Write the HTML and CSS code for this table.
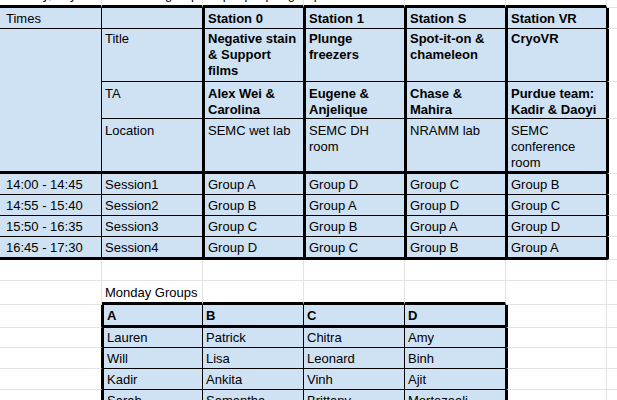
FILE: index.html
```html
<!DOCTYPE html>
<html lang="en">
<head>
<meta charset="utf-8">
<title>Schedule</title>
<link rel="stylesheet" href="styles.css">
</head>
<body>
<div class="sheet">
  <!-- R0 (clipped row above) -->
  <div class="c r0 g-r k-B">Monday, day 1</div>
  <div class="c r0 over g-r k-B">Hands-on groups: 4 people per group</div>
  <div class="c r0 g-r k-B"></div>
  <div class="c r0 g-r k-B"></div>
  <div class="c r0 g-r k-B"></div>
  <div class="c r0 g-r k-B"></div>
  <div class="c g-b"></div>

  <!-- R1 -->
  <div class="c t first k-r k-b">Times</div>
  <div class="c t k-r k-b"></div>
  <div class="c t b k-l k-r k-b">Station 0</div>
  <div class="c t b k-l k-r k-b">Station 1</div>
  <div class="c t b k-l k-r k-b">Station S</div>
  <div class="c t b k-l k-r k-b">Station VR</div>
  <div class="c k-l g-b"></div>

  <!-- R2 -->
  <div class="c t merged k-r k-B"></div>
  <div class="c t top p2 k-r k-b">Title</div>
  <div class="c t b top p2 k-l k-r k-b">Negative stain<br>&amp; Support<br>films</div>
  <div class="c t b top p2 k-l k-r k-b">Plunge<br>freezers</div>
  <div class="c t b top p2 k-l k-r k-b">Spot-it-on &amp;<br>chameleon</div>
  <div class="c t b top p2 k-l k-r k-b">CryoVR</div>
  <div class="c k-l g-b"></div>

  <!-- R3 -->
  <div class="c t top p4 k-r k-b">TA</div>
  <div class="c t b top p4 k-l k-r k-b">Alex Wei &amp;<br>Carolina</div>
  <div class="c t b top p4 k-l k-r k-b">Eugene &amp;<br>Anjelique</div>
  <div class="c t b top p4 k-l k-r k-b">Chase &amp;<br>Mahira</div>
  <div class="c t b top p4 k-l k-r k-b">Purdue team:<br>Kadir &amp; Daoyi</div>
  <div class="c k-l g-b"></div>

  <!-- R4 -->
  <div class="c t top p4 k-r k-B">Location</div>
  <div class="c t top p4 k-l k-r k-B">SEMC wet lab</div>
  <div class="c t top p4 k-l k-r k-B">SEMC DH<br>room</div>
  <div class="c t top p4 k-l k-r k-B">NRAMM lab</div>
  <div class="c t top p4 k-l k-r k-B">SEMC<br>conference<br>room</div>
  <div class="c k-l g-b"></div>

  <!-- R5 -->
  <div class="c t first k-r k-b">14:00 - 14:45</div>
  <div class="c t k-r k-b">Session1</div>
  <div class="c t k-l k-r k-b">Group A</div>
  <div class="c t k-l k-r k-b">Group D</div>
  <div class="c t k-l k-r k-b">Group C</div>
  <div class="c t k-l k-r k-b">Group B</div>
  <div class="c k-l g-b"></div>

  <!-- R6 -->
  <div class="c t first k-r k-b">14:55 - 15:40</div>
  <div class="c t k-r k-b">Session2</div>
  <div class="c t k-l k-r k-b">Group B</div>
  <div class="c t k-l k-r k-b">Group A</div>
  <div class="c t k-l k-r k-b">Group D</div>
  <div class="c t k-l k-r k-b">Group C</div>
  <div class="c k-l g-b"></div>

  <!-- R7 -->
  <div class="c t first k-r k-b">15:50 - 16:35</div>
  <div class="c t k-r k-b">Session3</div>
  <div class="c t k-l k-r k-b">Group C</div>
  <div class="c t k-l k-r k-b">Group B</div>
  <div class="c t k-l k-r k-b">Group A</div>
  <div class="c t k-l k-r k-b">Group D</div>
  <div class="c k-l g-b"></div>

  <!-- R8 -->
  <div class="c t first k-r k-B">16:45 - 17:30</div>
  <div class="c t k-r k-B">Session4</div>
  <div class="c t k-l k-r k-B">Group D</div>
  <div class="c t k-l k-r k-B">Group C</div>
  <div class="c t k-l k-r k-B">Group B</div>
  <div class="c t k-l k-r k-B">Group A</div>
  <div class="c k-l g-b"></div>

  <!-- R9 blank -->
  <div class="c g-r g-b"></div>
  <div class="c g-r g-b"></div>
  <div class="c g-r g-b"></div>
  <div class="c g-r g-b"></div>
  <div class="c g-r g-b"></div>
  <div class="c g-r g-b"></div>
  <div class="c g-b"></div>

  <!-- R10 -->
  <div class="c g-r g-b"></div>
  <div class="c over g-r k-B">Monday Groups</div>
  <div class="c g-r k-B"></div>
  <div class="c g-r k-B"></div>
  <div class="c g-r k-B"></div>
  <div class="c g-r g-b"></div>
  <div class="c g-b"></div>

  <!-- R11 -->
  <div class="c k-r g-b"></div>
  <div class="c t b k-l k-r k-B">A</div>
  <div class="c t b k-r k-B">B</div>
  <div class="c t b k-r k-B">C</div>
  <div class="c t b k-r k-B">D</div>
  <div class="c k-l g-r g-b"></div>
  <div class="c g-b"></div>

  <!-- R12 -->
  <div class="c k-r g-b"></div>
  <div class="c t k-l k-r k-b">Lauren</div>
  <div class="c t k-r k-b">Patrick</div>
  <div class="c t k-r k-b">Chitra</div>
  <div class="c t k-r k-b">Amy</div>
  <div class="c k-l g-r g-b"></div>
  <div class="c g-b"></div>

  <!-- R13 -->
  <div class="c k-r g-b"></div>
  <div class="c t k-l k-r k-b">Will</div>
  <div class="c t k-r k-b">Lisa</div>
  <div class="c t k-r k-b">Leonard</div>
  <div class="c t k-r k-b">Binh</div>
  <div class="c k-l g-r g-b"></div>
  <div class="c g-b"></div>

  <!-- R14 -->
  <div class="c k-r g-b"></div>
  <div class="c t k-l k-r k-b">Kadir</div>
  <div class="c t k-r k-b">Ankita</div>
  <div class="c t k-r k-b">Vinh</div>
  <div class="c t k-r k-b">Ajit</div>
  <div class="c k-l g-r g-b"></div>
  <div class="c g-b"></div>

  <!-- R15 -->
  <div class="c k-r g-b"></div>
  <div class="c t k-l k-r k-b">Sarah</div>
  <div class="c t k-r k-b">Samantha</div>
  <div class="c t k-r k-b">Brittany</div>
  <div class="c t k-r k-b">Mortezaali</div>
  <div class="c k-l g-r g-b"></div>
  <div class="c g-b"></div>
</div>
</body>
</html>
```

FILE: styles.css
```css
html, body {
  margin: 0;
  padding: 0;
  background: #ffffff;
}

body {
  width: 617px;
  height: 400px;
  overflow: hidden;
  font-family: "Liberation Sans", Arial, sans-serif;
  font-size: 13px;
  color: #000000;
}

.sheet {
  display: grid;
  grid-template-columns: 102px 101px 101px 101px 101px 101px 1fr;
  grid-template-rows: 8px 21px 53px 37px 55px 21px 21px 21px 23px 21px 24px 23px 20px 21px 21px 21px;
  width: 617px;
}

.c {
  box-sizing: border-box;
  display: flex;
  align-items: flex-end;
  padding: 0 3px 1px 3px;
  line-height: 16px;
  white-space: nowrap;
  overflow: hidden;
  border: 0 solid transparent;
  min-width: 0;
}

.r0 {
  padding-bottom: 2px;
}

.over {
  overflow: visible;
  position: relative;
  z-index: 1;
}

.first {
  padding-left: 6px;
}

.top {
  align-items: flex-start;
  padding-bottom: 0;
}

.p2 { padding-top: 2px; }
.p4 { padding-top: 4px; }

.merged {
  grid-row: span 3;
}

.t { background: #cfe2f3; }
.b { font-weight: bold; }

/* black borders */
.k-r { border-right: 1px solid #000000; }
.k-l { border-left: 2px solid #000000; }
.k-b { border-bottom: 1px solid #000000; }
.k-B { border-bottom: 3px solid #000000; }

/* gray grid lines */
.g-r { border-right: 1px solid #e2e3e3; }
.g-b { border-bottom: 1px solid #e2e3e3; }
```
